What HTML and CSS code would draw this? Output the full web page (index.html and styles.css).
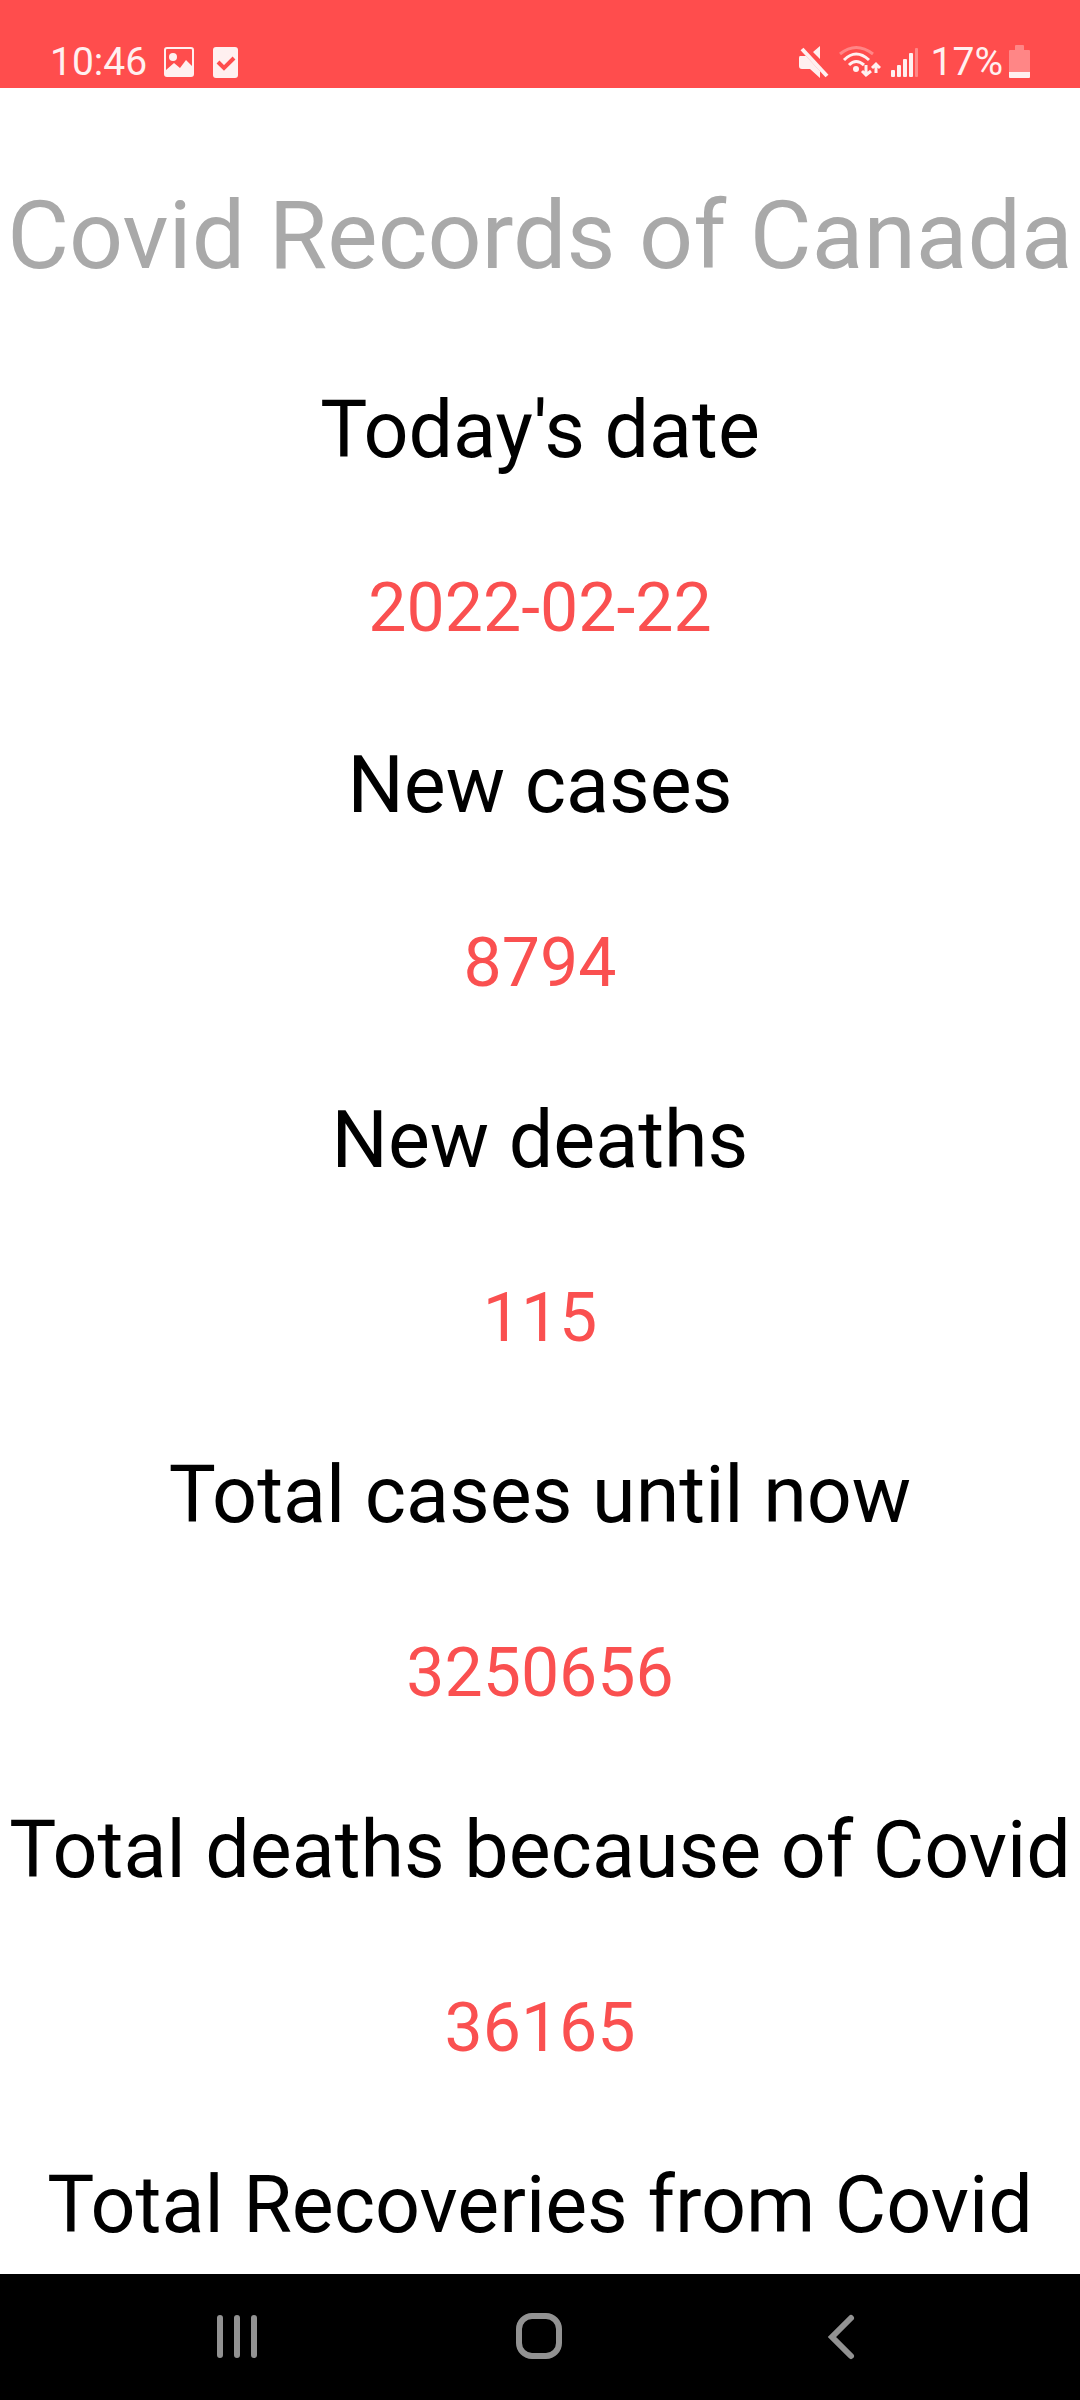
FILE: index.html
```html
<!DOCTYPE html>
<html lang="en">
<head>
<meta charset="utf-8">
<meta name="viewport" content="width=device-width">
<title>Covid Records of Canada</title>
<link rel="stylesheet" href="styles.css">
</head>
<body>
<header class="status">
  <div class="group notices">
    <span>10:46</span>
    <svg width="32" height="34" viewBox="0 0 32 34" role="img" aria-label="Picture saved">
      <path fill="currentColor" fill-rule="evenodd" d="M4 2H28Q31 2 31 5V29Q31 32 28 32H4Q1 32 1 29V5Q1 2 4 2ZM3 5V25L11 18L17 23L23 15L29 21V5Q29 4 28 4H4Q3 4 3 5Z"/>
      <circle cx="10" cy="12" r="4" fill="currentColor"/>
    </svg>
    <svg width="26" height="34" viewBox="0 0 26 34" role="img" aria-label="Task done">
      <rect y="2" width="25" height="31" rx="3" fill="currentColor"/>
      <path class="tick" d="M5 17L11 23L21 13"/>
    </svg>
  </div>
  <div class="group signals">
    <svg width="30" height="34" viewBox="0 0 30 34" role="img" aria-label="Sound off">
      <path fill="currentColor" d="M1 11H7L21 26V33L11 24H3Q0 24 0 21V13Q0 11 1 11ZM14 7L21 1V14Z"/>
      <path d="M3 4L28 31" stroke="currentColor" stroke-width="4"/>
    </svg>
    <svg width="42" height="34" viewBox="0 0 42 34" role="img" aria-label="Wi-Fi">
      <g fill="none" stroke="currentColor" stroke-width="3">
        <path opacity=".35" d="M1 9Q17 -4 34 9"/>
        <path d="M5 15Q17 3 30 15M10 20Q17 13 25 20"/>
        <path d="M27 20V30M23 26L27 30L32 26M37 28V19M33 23L37 19L41 23"/>
      </g>
      <circle cx="17" cy="24" r="3" fill="currentColor"/>
    </svg>
    <svg width="28" height="34" viewBox="0 0 28 34" role="img" aria-label="Mobile signal">
      <g fill="currentColor">
        <rect x="0" y="25" width="4" height="7" rx="1"/>
        <rect x="6" y="20" width="4" height="12" rx="1"/>
        <rect x="12" y="14" width="4" height="18" rx="1"/>
        <rect x="18" y="8" width="4" height="24" rx="1"/>
        <rect x="24" y="3" width="3" height="29" rx="1" opacity=".35"/>
      </g>
    </svg>
    <span class="charge">17%
      <svg width="21" height="34" viewBox="0 0 21 34" aria-hidden="true">
        <path fill="currentColor" opacity=".35" d="M7 0H14Q15 0 15 1V5H20Q21 5 21 6V27H0V6Q0 5 1 5H6V1Q6 0 7 0Z"/>
        <path fill="currentColor" d="M0 27H21V32Q21 33 20 33H1Q0 33 0 32Z"/>
      </svg>
    </span>
  </div>
</header>
<main class="records">
  <h1>Covid Records of Canada</h1>
  <dl>
    <dt>Today's date</dt><dd>2022-02-22</dd>
    <dt>New cases</dt><dd>8794</dd>
    <dt>New deaths</dt><dd>115</dd>
    <dt>Total cases until now</dt><dd>3250656</dd>
    <dt>Total deaths because of Covid</dt><dd>36165</dd>
    <dt>Total Recoveries from Covid</dt>
  </dl>
</main>
<nav class="nav">
  <button type="button" aria-label="Recent apps">
    <svg width="48" height="48" viewBox="0 0 48 48"><path d="M6 5V42M23 5V42M40 5V42"/></svg>
  </button>
  <button type="button" aria-label="Home">
    <svg width="48" height="48" viewBox="0 0 48 48"><rect x="3" y="3" width="40" height="40" rx="13"/></svg>
  </button>
  <button type="button" aria-label="Back">
    <svg width="48" height="48" viewBox="0 0 48 48"><path stroke-linejoin="miter" d="M33 5L14 24L33 43"/></svg>
  </button>
</nav>
</body>
</html>
```

FILE: styles.css
```css
* { box-sizing: border-box; }
body { margin: 0; min-height: 100vh; display: flex; flex-direction: column; font-family: Roboto, sans-serif; background: #fff; color: #000; }
svg { display: block; flex: none; }

.status { height: 88px; padding: 35px 50px 0; display: flex; justify-content: space-between; background: #ff4d4d; color: #fff0f0; font-size: 39px; line-height: 54px; }
.group, .charge { display: flex; align-items: center; }
.notices { gap: 16px; }
.notices svg + svg { margin-left: 2px; }
.signals { gap: 10px; }
.charge { gap: 6px; margin-left: 2px; }
.tick { fill: none; stroke: #ff4d4d; stroke-width: 4; }

.records { flex: 1; text-align: center; white-space: nowrap; }
h1 { margin: 84px 0 0; font-size: 95px; font-weight: 400; line-height: 128px; color: #a9a9a9; }
dl, dd { margin: 0; }
dl { padding-top: 77px; }
dt { font-size: 79px; line-height: 107px; }
dd { padding: 70px 0; font-size: 68px; line-height: 108px; color: #fa5050; }

.nav { height: 126px; display: grid; grid-template-columns: repeat(3, 28%); justify-content: center; background: #000; }
.nav button { display: flex; align-items: center; justify-content: center; padding: 0; border: 0; background: none; }
.nav svg { fill: none; stroke: #929292; stroke-width: 6; stroke-linecap: round; }
```
